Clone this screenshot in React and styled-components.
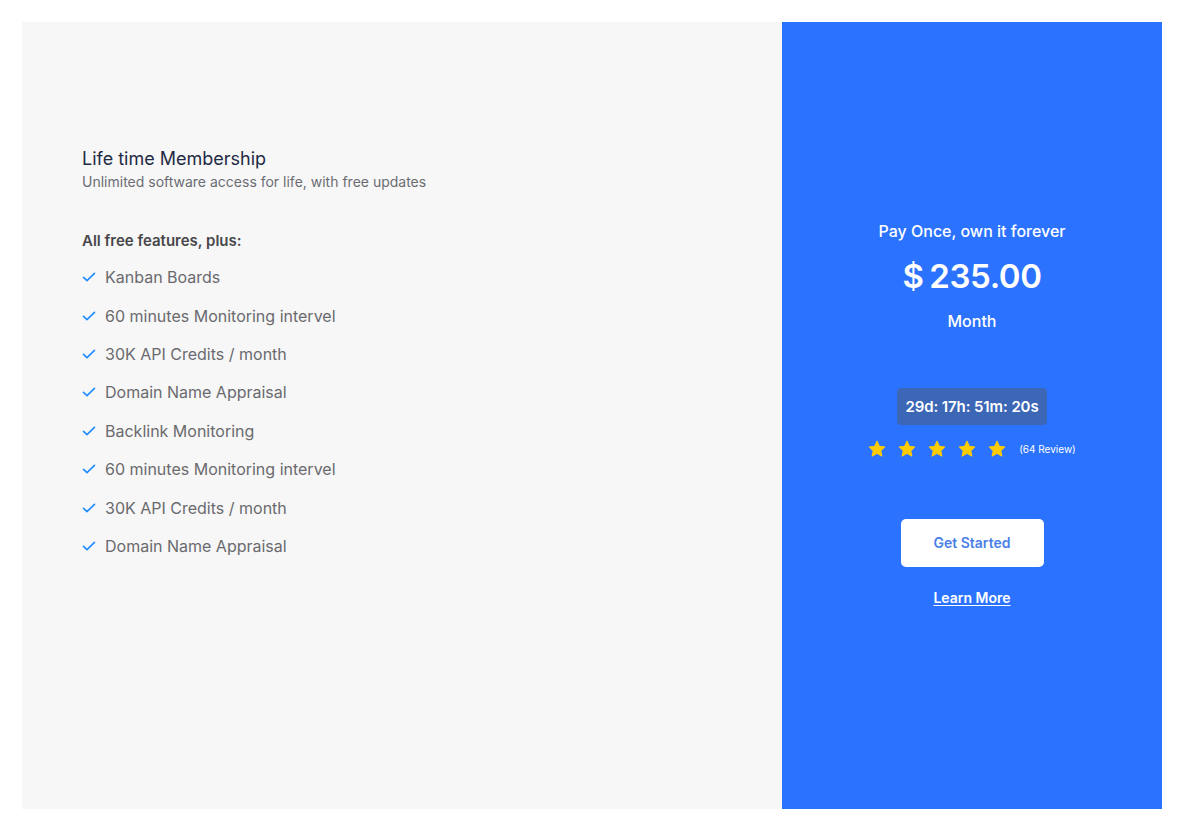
import React from 'react';
import styled, { createGlobalStyle } from 'styled-components';

const GlobalStyle = createGlobalStyle`
  body {
    margin: 0;
    background: #ffffff;
    font-family: Inter, "Liberation Sans", sans-serif;
  }
`;

const Page = styled.div`
  padding: 22px 21px 19px 22px;
`;

const Card = styled.div`
  display: flex;
  height: 787px;
`;

const LeftPanel = styled.div`
  flex: 1;
  background-color: #f7f7f7;
  padding: 126px 60px 0 60px;
`;

const RightPanel = styled.div`
  width: 380px;
  background-color: #2b73ff;
  display: flex;
  flex-direction: column;
  align-items: center;
  justify-content: center;
  color: #fff;
  padding-bottom: 4px;
`;

const Title = styled.h2`
  margin: 0;
  font-size: 18px;
  font-weight: 400;
  color: #1f2a44;
  line-height: 22px;
`;

const Subtitle = styled.p`
  margin: 2px 0 0;
  font-size: 14px;
  color: #6b6d73;
  line-height: 20px;
`;

const FeaturesTitle = styled.h4`
  margin: 38px 0 0;
  font-size: 15px;
  font-weight: 600;
  color: #47474b;
  line-height: 22px;
`;

const FeatureList = styled.ul`
  list-style: none;
  margin: 6px 0 0;
  padding: 0;
`;

const Feature = styled.li`
  display: flex;
  align-items: center;
  gap: 9px;
  height: 38.4px;
  font-size: 16px;
  color: #6a6a6e;
`;

const CheckIcon = () => (
  <svg width="14" height="14" viewBox="0 0 14 14" fill="none">
    <path d="M1.5 7.3 L5 10.6 L12.5 3.4" stroke="#1e8bff" strokeWidth="1.6" strokeLinecap="round" strokeLinejoin="round" />
  </svg>
);

const Tagline = styled.div`
  font-size: 16px;
  font-weight: 500;
  line-height: 22px;
`;

const Price = styled.div`
  margin-top: 13px;
  font-size: 33px;
  font-weight: 600;
  line-height: 42px;
  letter-spacing: -0.4px;
  word-spacing: -2px;
`;

const Period = styled.div`
  margin-top: 13px;
  font-size: 16px;
  font-weight: 500;
  line-height: 22px;
`;

const Timer = styled.div`
  margin-top: 56px;
  background-color: #3c66b6;
  border-radius: 4px;
  padding: 0 8px;
  height: 37px;
  display: flex;
  align-items: center;
  font-size: 15px;
  font-weight: 600;
  letter-spacing: -0.1px;
`;

const Rating = styled.div`
  margin-top: 15px;
  display: flex;
  align-items: center;
  gap: 13px;
`;

const Stars = styled.div`
  display: flex;
  gap: 12px;
`;

const ReviewCount = styled.span`
  font-size: 10px;
`;

const StartButton = styled.button`
  margin-top: 61px;
  width: 143px;
  height: 48px;
  border: none;
  border-radius: 5px;
  background: #fff;
  color: #4b7fe8;
  font-family: Inter, "Liberation Sans", sans-serif;
  font-size: 14px;
  font-weight: 600;
  cursor: pointer;
`;

const LearnLink = styled.a`
  margin-top: 21px;
  color: #fff;
  font-size: 14px;
  font-weight: 600;
  text-decoration: underline;
  text-underline-offset: 2px;
  line-height: 20px;
`;

const Star = () => (
  <svg width="18" height="18" viewBox="0 0 24 23">
    <path
      d="M12 1.2l3.1 6.6 7.2.9-5.3 5 1.4 7.1L12 17.3l-6.4 3.5L7 13.7 1.7 8.7l7.2-.9z"
      fill="#ffcc00"
      stroke="#ffcc00"
      strokeWidth="1.4"
      strokeLinejoin="round"
    />
  </svg>
);

const features = [
  'Kanban Boards',
  '60 minutes Monitoring intervel',
  '30K API Credits / month',
  'Domain Name Appraisal',
  'Backlink Monitoring',
  '60 minutes Monitoring intervel',
  '30K API Credits / month',
  'Domain Name Appraisal',
];

function App() {
  return (
    <>
      <GlobalStyle />
      <Page>
        <Card>
          <LeftPanel>
            <Title>Life time Membership</Title>
            <Subtitle>Unlimited software access for life, with free updates</Subtitle>
            <FeaturesTitle>All free features, plus:</FeaturesTitle>
            <FeatureList>
              {features.map((f, i) => (
                <Feature key={i}>
                  <CheckIcon />
                  {f}
                </Feature>
              ))}
            </FeatureList>
          </LeftPanel>
          <RightPanel>
            <Tagline>Pay Once, own it forever</Tagline>
            <Price>$ 235.00</Price>
            <Period>Month</Period>
            <Timer>29d: 17h: 51m: 20s</Timer>
            <Rating>
              <Stars>
                {[0, 1, 2, 3, 4].map((i) => (
                  <Star key={i} />
                ))}
              </Stars>
              <ReviewCount>(64 Review)</ReviewCount>
            </Rating>
            <StartButton>Get Started</StartButton>
            <LearnLink href="#">Learn More</LearnLink>
          </RightPanel>
        </Card>
      </Page>
    </>
  );
}

export default App;
